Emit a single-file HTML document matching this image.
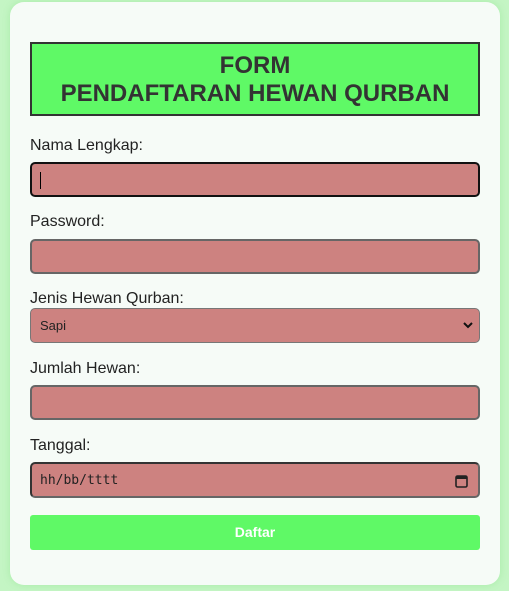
<!DOCTYPE html>
<html><head><style>
body{margin:0;width:509px;height:591px;background:#c4f5c4;font-family:"Liberation Sans",sans-serif;position:relative;overflow:hidden}
.card{position:absolute;left:10px;top:2px;width:490px;height:583px;background:#f6fbf7;border-radius:14px;box-shadow:0 0 8px rgba(150,230,150,.6)}
.h{position:absolute;left:30px;top:42px;width:446px;border:2px solid #333;background:#5ff966;color:#333;font-weight:bold;font-size:24px;text-align:center;line-height:28px;padding-top:8px;height:62px}
.l{position:absolute;left:30px;font-size:16px;color:#222}
.i{position:absolute;left:30px;width:450px;box-sizing:border-box;background:#cd8280;border:2px solid #666;border-radius:5px}
.b{position:absolute;left:30px;top:515px;width:450px;height:35px;background:#5ff966;border-radius:3px;color:#fff;font-weight:bold;font-size:14px;text-align:center;line-height:35px}
</style></head><body>
<div class="card"></div>
<div class="h">FORM<br>PENDAFTARAN HEWAN QURBAN</div>
<div class="l" style="top:137px">Nama Lengkap:</div>
<div class="i" style="top:162px;height:35px;border-color:#111"><div style="position:absolute;left:8px;top:8px;width:1px;height:17px;background:#000"></div></div>
<div class="l" style="top:213px">Password:</div>
<div class="i" style="top:239px;height:35px"></div>
<div class="l" style="top:290px">Jenis Hewan Qurban:</div>
<div class="i" style="top:308px;height:35px;border-width:1px;border-color:#777"><span style="position:absolute;left:9px;top:9px;font-size:13px;color:#222">Sapi</span><svg style="position:absolute;right:6px;top:12px" width="10" height="8" viewBox="0 0 10 8"><path d="M1 2l4 4 4-4" stroke="#111" stroke-width="2" fill="none"/></svg></div>
<div class="l" style="top:360px">Jumlah Hewan:</div>
<div class="i" style="top:385px;height:35px"></div>
<div class="l" style="top:437px">Tanggal:</div>
<div class="i" style="top:462px;height:36px;border-color:#333 #666 #666 #333"><span style="position:absolute;left:8px;top:9px;font-family:'DejaVu Sans Mono',monospace;font-size:13px;color:#222">hh/bb/tttt</span><svg style="position:absolute;right:10px;top:10px" width="13" height="14" viewBox="0 0 13 14"><rect x="1" y="2" width="11" height="11" rx="1.5" fill="none" stroke="#222" stroke-width="1.6"/><rect x="1" y="2" width="11" height="3" fill="#222"/></svg></div>
<div class="b">Daftar</div>
</body></html>
